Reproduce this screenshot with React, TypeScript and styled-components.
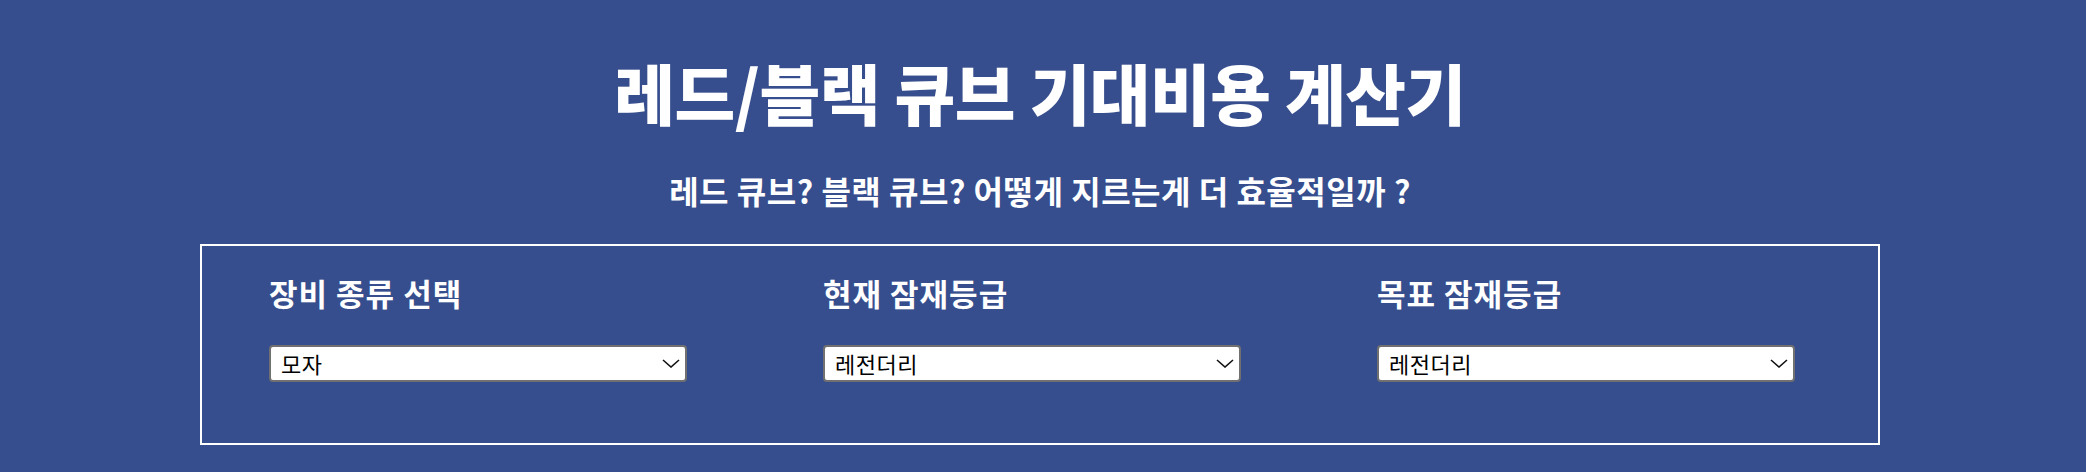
import { FC } from 'react'
import styled, { createGlobalStyle } from 'styled-components'

const GlobalStyle = createGlobalStyle`
  html, body {
    margin: 0;
    padding: 0;
    background: #364e8d;
  }
`

const fields = [
  { label: '장비 종류 선택', value: '모자', options: ['모자', '상의', '하의', '장갑', '신발', '망토', '무기'] },
  { label: '현재 잠재등급', value: '레전더리', options: ['레어', '에픽', '유니크', '레전더리'] },
  { label: '목표 잠재등급', value: '레전더리', options: ['레어', '에픽', '유니크', '레전더리'] },
]

const Chevron: FC = () => (
  <ArrowIcon width="18" height="9" viewBox="0 0 18 9" fill="none">
    <path d="M1 1l8 7 8-7" stroke="#111" strokeWidth="1.6" />
  </ArrowIcon>
)

const App: FC = () => {
  return (
    <Page>
      <GlobalStyle />
      <Title>레드/블랙 큐브 기대비용 계산기</Title>
      <SubTitle>레드 큐브? 블랙 큐브? 어떻게 지르는게 더 효율적일까 ?</SubTitle>
      <Panel>
        {fields.map((f) => (
          <Field key={f.label}>
            <Label>{f.label}</Label>
            <SelectWrap>
              <Select defaultValue={f.value}>
                {f.options.map((o) => (
                  <option key={o} value={o}>{o}</option>
                ))}
              </Select>
              <Chevron />
            </SelectWrap>
          </Field>
        ))}
      </Panel>
    </Page>
  )
}

const Page = styled.div`
  min-height: 100vh;
  box-sizing: border-box;
  padding: 58px 6px 0 0;
  background: #364e8d;
  font-family: 'Noto Sans CJK KR', 'Noto Sans', sans-serif;
  color: #fff;
`
const Title = styled.h1`
  margin: 0;
  text-align: center;
  font-size: 66px;
  line-height: 66px;
  font-weight: 900;
  letter-spacing: -0.5px;
`
const SubTitle = styled.h2`
  margin: 50px 0 0;
  text-align: center;
  font-size: 32px;
  line-height: 32px;
  font-weight: 700;
  letter-spacing: 0.5px;
`
const Panel = styled.div`
  width: 1680px;
  box-sizing: border-box;
  margin: 38px auto 0;
  border: 2px solid #fff;
  display: flex;
  gap: 136px;
  padding: 31px 0 61px 67px;
`
const Field = styled.div`
  display: flex;
  flex-direction: column;
  gap: 37px;
  width: 418px;
`
const Label = styled.div`
  font-size: 31px;
  line-height: 31px;
  font-weight: 700;
  letter-spacing: 1px;
`
const SelectWrap = styled.div`
  position: relative;
  width: 418px;
  height: 37px;
`
const Select = styled.select`
  appearance: none;
  display: block;
  width: 100%;
  height: 37px;
  box-sizing: border-box;
  margin: 0;
  border: 2px solid #707070;
  border-radius: 4px;
  background: #fff;
  padding: 0 36px 3px 10px;
  font-family: 'Noto Sans CJK KR', 'Noto Sans', sans-serif;
  font-size: 22px;
  letter-spacing: 0.5px;
  color: #000;
  outline: none;
`
const ArrowIcon = styled.svg`
  position: absolute;
  right: 7px;
  top: 14px;
  pointer-events: none;
`

export default App
